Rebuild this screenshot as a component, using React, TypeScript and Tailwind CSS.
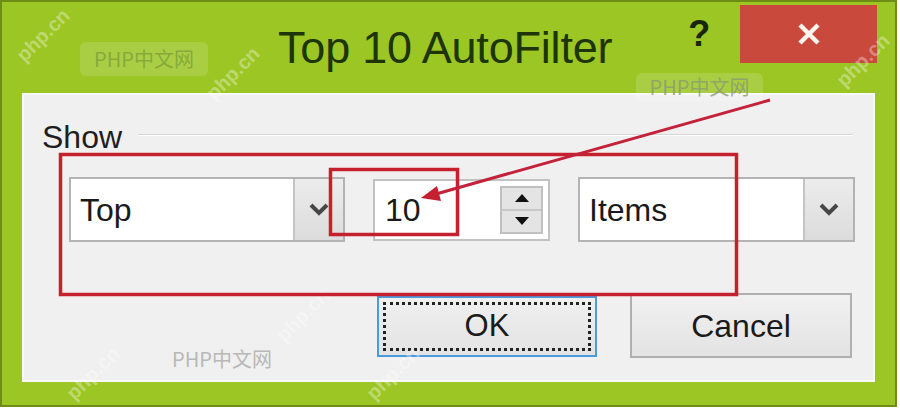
import React from "react";

const font = { fontFamily: '"Liberation Sans", Arial, sans-serif' };

function Chevron() {
  return (
    <svg width="22" height="15" viewBox="0 0 22 15">
      <path d="M3 3 L11 11 L19 3" fill="none" stroke="#474747" strokeWidth="4" />
    </svg>
  );
}

function Combo({ label, width }: { label: string; width: string }) {
  return (
    <div className={`${width} h-[65px] flex border-2 border-[#b3b3b3] bg-white`}>
      <div className="flex-1 flex items-center pl-[9px] text-[32px] text-[#1a1a1a]">{label}</div>
      <div className="w-[50px] flex items-center justify-center bg-gradient-to-b from-[#ececec] to-[#dcdcdc] border-l-2 border-[#c4c4c4]">
        <Chevron />
      </div>
    </div>
  );
}

function Spin() {
  return (
    <div className="w-[177px] h-[62px] flex items-center border-2 border-[#c2c2c2] bg-white pr-[5px]">
      <div className="flex-1 pl-[10px] text-[32px] text-[#1a1a1a]">10</div>
      <div className="w-[43px] h-[48px] flex flex-col border-2 border-[#c0c0c0] bg-[#e4e4e4]">
        <div className="flex-1 flex items-center justify-center border-b-2 border-[#c8c8c8]">
          <svg width="14" height="8" viewBox="0 0 14 8">
            <path d="M0 8 L7 0 L14 8 Z" fill="#111" />
          </svg>
        </div>
        <div className="flex-1 flex items-center justify-center">
          <svg width="14" height="8" viewBox="0 0 14 8">
            <path d="M0 0 L7 8 L14 0 Z" fill="#111" />
          </svg>
        </div>
      </div>
    </div>
  );
}

function Mark({ className }: { className: string }) {
  return (
    <span className={`absolute text-[20px] text-white/35 font-bold -rotate-45 ${className}`}>php.cn</span>
  );
}

export default function App() {
  return (
    <div className="w-[900px] h-[409px] bg-white relative overflow-hidden" style={font}>
      <div className="w-[897px] h-[407px] bg-[#9bc623] border-2 border-[#6d8d15] flex flex-col">
        {/* title bar */}
        <div className="h-[91px] flex items-start">
          <div className="ml-[276px] mt-[23px] text-[45px] leading-none text-[#1d3508] tracking-[-0.2px]">
            Top 10 AutoFilter
          </div>
          <div className="ml-[76px] mt-[14px] text-[36px] font-bold text-[#18270a] leading-none">?</div>
          <div className="ml-auto mr-[18px] mt-[3px] w-[137px] h-[58px] bg-[#c9493d] flex items-center justify-center">
            <svg width="24" height="24" viewBox="0 0 24 24">
              <path d="M3 3 L21 21 M21 3 L3 21" stroke="#fff6ef" strokeWidth="4.5" />
            </svg>
          </div>
        </div>

        {/* client panel */}
        <div className="mx-[20px] h-[289px] bg-[#f0f0f0] border-2 border-[#f8f8f8] flex flex-col">
          <div className="h-[58px] flex items-start pt-[26px] pl-[18px]">
            <span className="text-[32px] leading-none text-[#1e1e1e]">Show</span>
            <div className="flex-1 ml-[16px] mr-[20px] mt-[13px] border-t border-[#d6d6d6] border-b border-b-white" />
          </div>
          <div className="mt-[24px] flex items-center gap-[28px] pl-[45px]">
            <Combo label="Top" width="w-[276px]" />
            <Spin />
            <Combo label="Items" width="w-[277px]" />
          </div>
          <div className="mt-[54px] flex gap-[33px] pl-[353px]">
            <div className="w-[220px] h-[61px] border-2 border-[#4b9be0] bg-gradient-to-b from-[#f0f0f0] to-[#e3e3e3] p-[4px]">
              <div className="h-full border-[3px] border-dotted border-[#222] flex items-center justify-center text-[31px] text-[#1a1a1a]">
                OK
              </div>
            </div>
            <div className="w-[222px] h-[65px] -mt-[3px] border-2 border-[#b0b0b0] bg-gradient-to-b from-[#f1f1f1] to-[#e3e3e3] flex items-center justify-center text-[32px] text-[#1a1a1a]">
              Cancel
            </div>
          </div>
        </div>
      </div>

      {/* watermarks */}
      <div className="absolute left-[80px] top-[42px] w-[128px] h-[34px] rounded-md bg-white/15 flex items-center justify-center text-[20px] text-[#7f9f3a]/80" style={{ fontFamily: '"Noto Sans CJK SC", sans-serif' }}>
        PHP中文网
      </div>
      <div className="absolute left-[636px] top-[73px] w-[127px] h-[28px] rounded-md bg-white/15 flex items-center justify-center text-[20px] text-[#8a9a70]/80" style={{ fontFamily: '"Noto Sans CJK SC", sans-serif' }}>
        PHP中文网
      </div>
      <div className="absolute left-[172px] top-[344px] text-[20px] text-[#b8b8b8]" style={{ fontFamily: '"Noto Sans CJK SC", sans-serif' }}>
        PHP中文网
      </div>
      <Mark className="left-[10px] top-[20px]" />
      <Mark className="left-[200px] top-[58px]" />
      <Mark className="left-[270px] top-[300px]" />
      <Mark className="left-[830px] top-[45px]" />
      <Mark className="left-[360px] top-[358px]" />
      <Mark className="left-[60px] top-[358px]" />

      {/* annotations */}
      <svg className="absolute inset-0 pointer-events-none" width="900" height="409" viewBox="0 0 900 409">
        <rect x="60.5" y="154.5" width="676" height="140" fill="none" stroke="#c6202f" strokeWidth="3.5" />
        <rect x="330.5" y="169.5" width="127" height="65" fill="none" stroke="#c6202f" strokeWidth="3.5" />
        <line x1="770" y1="100" x2="436" y2="194" stroke="#c4213a" strokeWidth="3" />
        <polygon points="421,198 441,201 437,186" fill="#c6202f" />
      </svg>
    </div>
  );
}
